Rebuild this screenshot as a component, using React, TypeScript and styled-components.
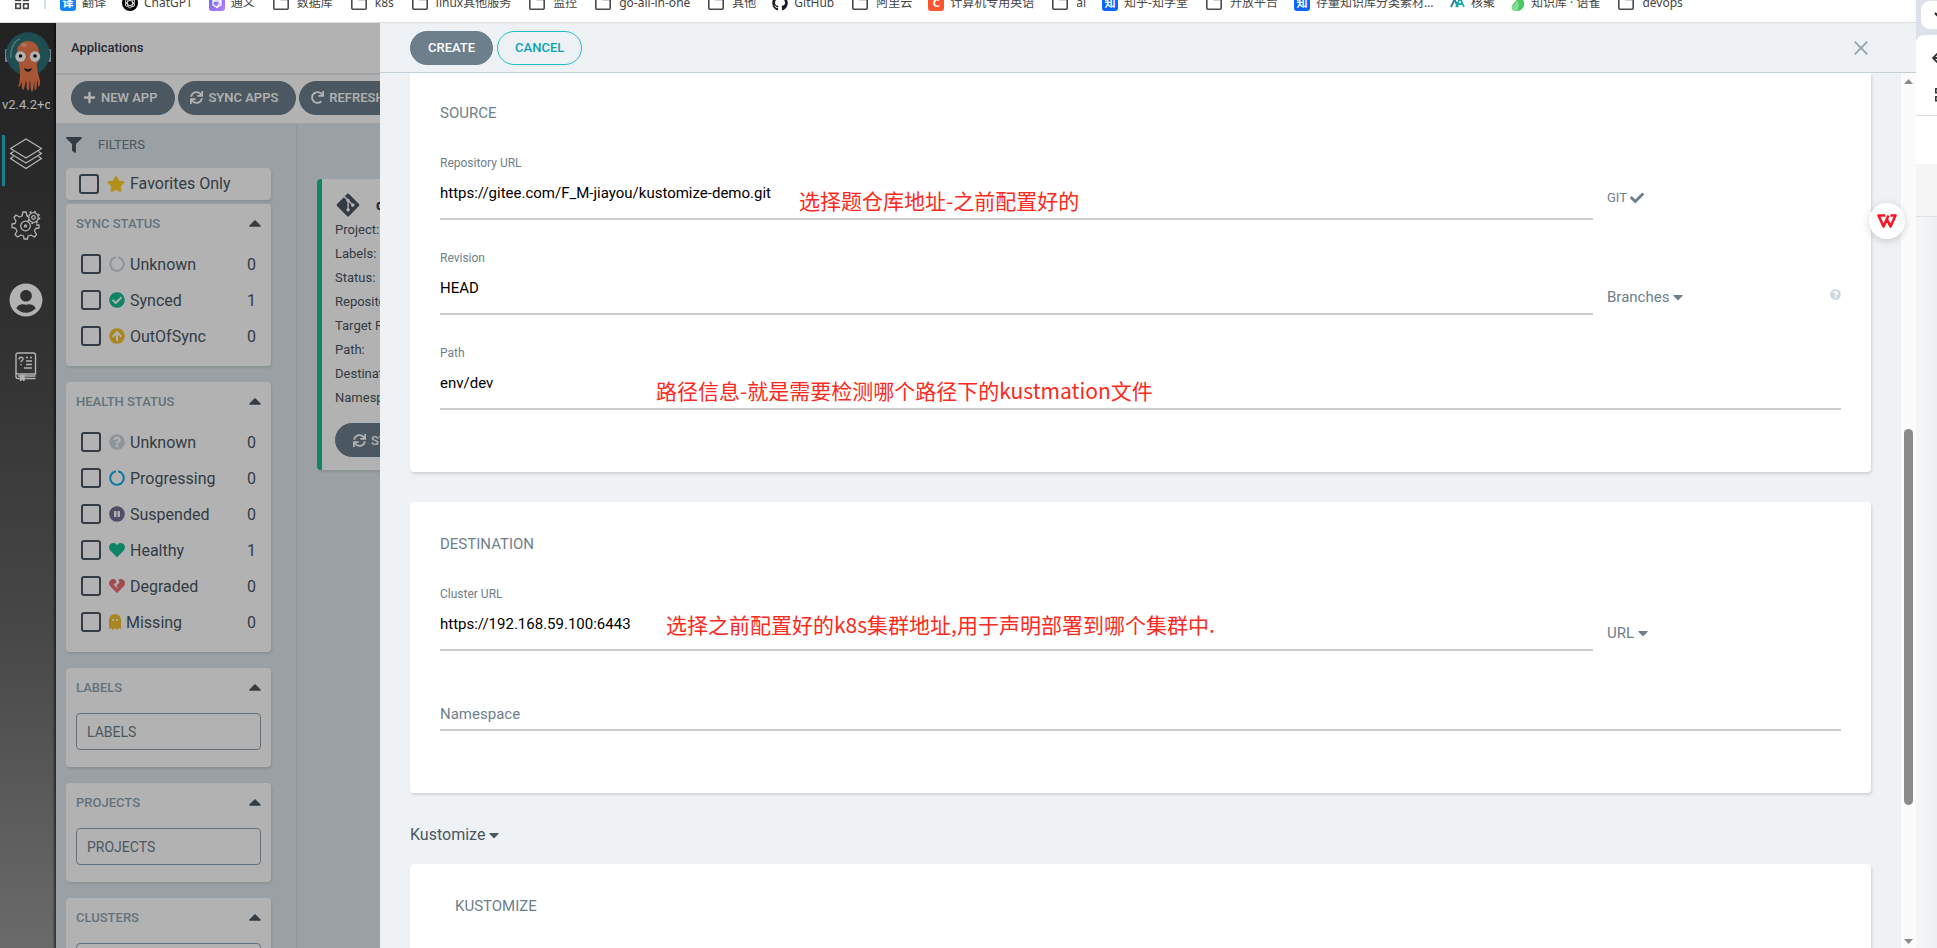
import React from "react";
import styled, { createGlobalStyle } from "styled-components";
import {
  FaPlus, FaSync, FaRedo, FaFilter, FaStar, FaCircleNotch, FaCheckCircle, FaArrowCircleUp,
  FaQuestionCircle, FaPauseCircle, FaHeart, FaHeartBroken, FaGhost, FaCaretUp, FaCaretDown,
  FaCheck, FaGithub, FaGitAlt, FaUserCircle,
} from "react-icons/fa";

const GlobalStyle = createGlobalStyle`
  *, *::before, *::after { box-sizing: border-box; }
  body { margin: 0; overflow: hidden; font-family: Roboto, "Noto Sans CJK SC", sans-serif; color: #495763; }
  button, input { font-family: inherit; }
  button { cursor: pointer; }
  svg { display: block; flex: none; }
  p, h1, h2, h3, ul, dl, dt { margin: 0; padding: 0; font-weight: 400; }
`;

/* ---------- window frame ---------- */

const Desktop = styled.div`
  display: flex;
  height: 100vh;
  overflow: hidden;
  background: #fff;
`;

const Browser = styled.div`
  position: relative;
  flex: 1;
  min-width: 0;
  display: flex;
  flex-direction: column;
`;

const BookmarkBar = styled.nav`
  flex: none;
  height: 23px;
  padding-left: 15px;
  border-bottom: 1px solid #dedede;
  display: flex;
  align-items: flex-start;
  gap: 16px;
  overflow: hidden;
  background: #fff;
`;

const Bookmark = styled.a`
  flex: none;
  display: flex;
  align-items: center;
  gap: 6px;
  height: 20px;
  margin-top: -7px;
  font: 12px/20px "Noto Sans", "Noto Sans CJK SC", sans-serif;
  color: #444;
  text-decoration: none;
  white-space: nowrap;
`;

const Truncated = styled.span`
  width: 118px;
  overflow: hidden;
  text-overflow: ellipsis;
`;

const BookmarkDivider = styled.span`
  width: 2px;
  height: 9px;
  margin: 0 -2px 0 -1px;
  background: #cfdff8;
`;

const Tile = styled.span<{ $bg: string }>`
  width: 16px;
  height: 16px;
  border-radius: 3px;
  background: ${(p) => p.$bg};
  color: #fff;
  font-size: 11px;
  font-weight: 700;
  line-height: 16px;
  text-align: center;
`;

const FolderIcon = () => (
  <svg width="20" height="20" viewBox="0 0 20 20" fill="none" stroke="#4a4a4a" strokeWidth="1.6">
    <path d="M2.8 4.2h5l2 2.2h7.4v8.8a1 1 0 0 1-1 1H3.8a1 1 0 0 1-1-1z" />
  </svg>
);

const AppsIcon = () => (
  <svg width="14" height="20" viewBox="0 0 14 20" fill="none" stroke="#444" strokeWidth="1.6">
    <rect x="0.8" y="2.8" width="4.6" height="4.6" />
    <rect x="8.6" y="2.8" width="4.6" height="4.6" />
    <rect x="0.8" y="10.8" width="4.6" height="4.6" />
    <rect x="8.6" y="10.8" width="4.6" height="4.6" />
  </svg>
);

const ChatIcon = () => (
  <svg width="16" height="16" viewBox="0 0 16 16">
    <circle cx="8" cy="8" r="8" fill="#000" />
    <g fill="none" stroke="#ddd" strokeWidth="0.9">
      <ellipse cx="8" cy="8" rx="2.5" ry="5" />
      <ellipse cx="8" cy="8" rx="2.5" ry="5" transform="rotate(60 8 8)" />
      <ellipse cx="8" cy="8" rx="2.5" ry="5" transform="rotate(120 8 8)" />
    </g>
  </svg>
);

const TongyiIcon = () => (
  <svg width="16" height="16" viewBox="0 0 16 16">
    <defs>
      <linearGradient id="ty" x1="0" y1="0" x2="1" y2="1">
        <stop offset="0" stopColor="#5a6bf5" />
        <stop offset="1" stopColor="#c27bf7" />
      </linearGradient>
    </defs>
    <rect width="16" height="16" rx="3" fill="url(#ty)" />
    <path d="M8 3l4 2.3v4.5L8 12.5 4 9.8V5.3z M4.5 6h7L8 12" fill="none" stroke="#fff" strokeWidth="1.3" />
  </svg>
);

const ClusterMarkIcon = () => (
  <svg width="15" height="16" viewBox="0 0 15 16" fill="none" strokeWidth="1.8">
    <path d="M1 12L4.5 4.5 8 12" stroke="#2a7f9d" />
    <path d="M6 12L10 3l4 9M8 9h4" stroke="#18b0a8" />
  </svg>
);

const YuqueIcon = () => (
  <svg width="14" height="16" viewBox="0 0 14 16">
    <path d="M8 0c4 3 6 7 5 11-1 3-4 5-7 5-4 0-6-2-5-5 1-3 4-4 5-7 1-2 1-3 2-4z" fill="#4cc764" />
    <path d="M1 12c2-3 4-4 5-7 2 3 3 7 0 11-4 0-6-1-5-4z" fill="#7edc8e" />
  </svg>
);

type Mark = { label: string; icon?: React.ReactNode; cut?: boolean };
const bookmarks: Mark[] = [
  { label: "翻译", icon: <Tile $bg="#1485ee">译</Tile> },
  { label: "ChatGPT", icon: <ChatIcon /> },
  { label: "通义", icon: <TongyiIcon /> },
  { label: "数据库" },
  { label: "k8s" },
  { label: "linux其他服务" },
  { label: "监控" },
  { label: "go-all-in-one" },
  { label: "其他" },
  { label: "GitHub", icon: <FaGithub size={16} color="#1b1f23" /> },
  { label: "阿里云" },
  { label: "计算机专用英语", icon: <Tile $bg="#fc5531">C</Tile> },
  { label: "ai" },
  { label: "知乎-知学堂", icon: <Tile $bg="#0a66ff">知</Tile> },
  { label: "开放平台" },
  { label: "存量知识库分类素材整理", icon: <Tile $bg="#0a66ff">知</Tile>, cut: true },
  { label: "核聚", icon: <ClusterMarkIcon /> },
  { label: "知识库 · 语雀", icon: <YuqueIcon /> },
  { label: "devops" },
];

/* ---------- application ---------- */

const AppArea = styled.div`
  position: relative;
  flex: 1;
  min-height: 0;
  display: flex;
`;

const Underlay = styled.div`
  position: relative;
  flex: none;
  width: 380px;
  display: flex;
  overflow: hidden;
`;

const Dim = styled.div`
  position: absolute;
  inset: 0;
  background: rgba(0, 0, 0, 0.3);
  pointer-events: none;
`;

const SideNav = styled.nav`
  position: relative;
  flex: none;
  width: 56px;
  padding-top: 9px;
  display: flex;
  flex-direction: column;
  align-items: center;
  background: linear-gradient(#313131, #484848 35%, #666 65%, #999);
  box-shadow: inset -3px 0 2px -1px rgba(0, 0, 0, 0.5);
`;

const Version = styled.div`
  width: 48px;
  height: 20px;
  margin-top: 1px;
  margin-right: 4px;
  font-size: 13px;
  line-height: 20px;
  color: #fff;
  overflow: hidden;
  white-space: nowrap;
`;

const NavLink = styled.a<{ $active?: boolean; $height: number }>`
  width: 52px;
  height: ${(p) => p.$height}px;
  padding: 0 7px ${(p) => (p.$active ? 14 : 0)}px 0;
  display: flex;
  align-items: center;
  justify-content: center;
  border-left: 3px solid ${(p) => (p.$active ? "#22b8cb" : "transparent")};
  color: #fff;
`;

const NavGroup = styled.div`
  display: flex;
  flex-direction: column;
  gap: 16px;
  padding-top: 20px;
`;

const Octopus = () => (
  <svg width="46" height="62" viewBox="0 0 46 62">
    <rect x="0" y="17" width="3" height="13" rx="1" fill="#a9bccb" />
    <rect x="43" y="17" width="3" height="13" rx="1" fill="#a9bccb" />
    <circle cx="23" cy="22" r="21.5" fill="#2d7074" stroke="#2d5f74" strokeWidth="1" />
    <path d="M6 26C5 17 9 9 15 7" fill="none" stroke="#7db6b9" strokeWidth="1.2" />
    <path
      d="M12 20c0-7 5-11 11-11s11 4 11 11c0 6-2 9-2 14 0 6 2 9 3 15 0 3 0 5-2 6 0-3 0-5-1-7 0 4 0 9-2 11-1-3 0-7-1-11 0 4 0 9-2 12-2-2-1-7-2-12-1 4 0 9-2 11-2-3-1-7-2-11-1 3-1 8-3 10-2-2-1-6-1-9-1 3-2 6-4 6 2-5 2-9 2-15 0-8-3-13-3-20z"
      fill="#f07a4c"
    />
    <ellipse cx="19" cy="13" rx="3" ry="2" fill="#f9a283" />
    <circle cx="15.5" cy="24.5" r="5.2" fill="#fff" />
    <circle cx="30" cy="24.5" r="5.2" fill="#fff" />
    <circle cx="15.5" cy="24" r="1.8" fill="#111" />
    <circle cx="30" cy="24" r="1.8" fill="#111" />
    <path d="M19 36c2 1.5 6 1.5 8 0-1 5-7 5-8 0z" fill="#222" />
  </svg>
);

const LayersIcon = () => (
  <svg width="34" height="32" viewBox="0 0 34 32" fill="none" stroke="#fff" strokeWidth="1.4" strokeLinejoin="round">
    <path d="M17 1l15.5 9.5L17 20 1.5 10.5z" />
    <path d="M4.5 13.5l-3 2L17 25l15.5-9.5-3-2" />
    <path d="M4.5 18.5l-3 2L17 30.500l15.5-10-3-2" />
  </svg>
);

const GearsIcon = () => (
  <svg width="30" height="30" viewBox="0 0 30 30" fill="none" stroke="#fff" strokeWidth="1.3" strokeLinejoin="round">
    <path d="M16 6l-1-4h-3l-1 4-2.5 1L5 5 3 7.5 5 11l-1 2.5-3 .5v3.5l3.5.7L6 21l-2 3.5L6.5 27l3.5-2 2.5 1 .5 3h3.5l.5-3 3-1 3.5 2 2-2.5-2-3.5 1-2.5 3.5-.5V15h-3" />
    <circle cx="14.5" cy="16" r="4.8" />
    <circle cx="14.5" cy="16" r="1" />
    <circle cx="22.5" cy="7.5" r="4.8" />
    <circle cx="22.5" cy="7.5" r="1.8" />
    <circle cx="22.5" cy="7.5" r="6" strokeDasharray="2 2.7" strokeWidth="1.6" />
  </svg>
);

const BookIcon = () => (
  <svg width="22" height="29" viewBox="0 0 22 29" fill="none" stroke="#fff" strokeWidth="1.4">
    <path d="M3 1h15.5a2 2 0 0 1 2 2v19H3a2 2 0 0 1-2-2V3a2 2 0 0 1 2-2z" />
    <path d="M1 20v4.5a2 2 0 0 0 2 2h17.5M3 24h17.5" />
    <path d="M5.5 23v5.5l1.8-1.5L9 28.500V23" fill="#fff" />
    <path d="M11 5.5h2M11 9h6M11 12.5h6M9 16h8M15 5.5h2" />
    <path d="M4 7.5c0-3 4-3 4-.5 0 1.5-2 1.5-2 3.2M6 12v1.3" />
  </svg>
);

const Content = styled.div`
  flex: none;
  width: 560px;
  display: flex;
  flex-direction: column;
  background: #dee6eb;
`;

const TopBar = styled.header`
  flex: none;
  height: 52px;
  padding: 0 15px;
  border-bottom: 2px solid #e2e9ec;
  background: #fff;
  font-size: 13px;
  font-weight: 500;
  line-height: 49px;
  color: #363c4a;
`;

const Toolbar = styled.div`
  flex: none;
  height: 50px;
  padding: 6px 15px;
  display: flex;
  gap: 3px;
  border-bottom: 2px solid #e2e9ec;
  background: #fff;
`;

const Pill = styled.button<{ $outline?: boolean }>`
  flex: none;
  height: 34px;
  padding: 0 17px;
  display: inline-flex;
  align-items: center;
  gap: 5px;
  border: 1px solid ${(p) => (p.$outline ? "#1fbdd0" : "#6d7f8b")};
  border-radius: 17px;
  background: ${(p) => (p.$outline ? "transparent" : "#6d7f8b")};
  color: ${(p) => (p.$outline ? "#0da2b4" : "#fff")};
  font-size: 13px;
  font-weight: 500;
  white-space: nowrap;
`;

const ToolPill = styled(Pill)`
  padding: 0 17px 2px 11px;
`;

const Workspace = styled.div`
  flex: 1;
  min-height: 0;
  display: flex;
`;

const Filters = styled.aside`
  flex: none;
  width: 241px;
  padding: 0 25px 0 10px;
  border-right: 1px solid #ccd4d9;
`;

const FiltersTitle = styled.h2`
  height: 43px;
  padding-bottom: 4px;
  display: flex;
  align-items: center;
  gap: 16px;
  font-size: 13px;
  color: #6d7f8b;
`;

const FilterCard = styled.section<{ $gap?: number }>`
  margin-bottom: ${(p) => p.$gap ?? 16}px;
  border-radius: 4px;
  background: #fff;
  box-shadow: 1px 2px 3px rgba(0, 0, 0, 0.1);
  overflow: hidden;
`;

const FilterHead = styled.h3`
  height: 42px;
  padding: 0 6px 4px 10px;
  display: flex;
  align-items: center;
  justify-content: space-between;
  font-size: 13px;
  font-weight: 500;
  color: #8fa4b1;
  svg { color: #495763; }
`;

const FilterRows = styled.div`
  padding: 0 15px 12px;
`;

const FilterRow = styled.label<{ $compact?: boolean }>`
  height: ${(p) => (p.$compact ? 32 : 36)}px;
  padding: ${(p) => (p.$compact ? "0 0 1px 13px" : "0")};
  display: flex;
  align-items: center;
  font-size: 16px;
  color: #495763;
`;

const Check = styled.input`
  appearance: none;
  flex: none;
  width: 20px;
  height: 20px;
  margin: 0 8px 0 0;
  border: 2px solid #495763;
  border-radius: 3px;
`;

const RowName = styled.span`
  flex: 1;
  padding-left: 5px;
`;

const GhostIcon = styled(FaGhost)`
  width: 12px;
`;

const FilterBox = styled.div`
  padding: 3px 10px 17px;
`;

const FilterInput = styled.input`
  display: block;
  width: 100%;
  height: 37px;
  padding: 0 10px;
  border: 1px solid #8fa4b1;
  border-radius: 4px;
  background: transparent;
  font-size: 14px;
  color: #495763;
  &::placeholder { color: #6d7f8b; opacity: 1; }
`;

const Tiles = styled.main`
  flex: 1;
  padding: 54px 20px;
`;

const AppTile = styled.article`
  height: 291px;
  padding: 13px;
  border-left: 5px solid #18be94;
  border-radius: 4px;
  background: #fff;
  box-shadow: 1px 2px 3px rgba(0, 0, 0, 0.1);
`;

const TileTitle = styled.h2`
  display: flex;
  align-items: center;
  gap: 15px;
  font-size: 15px;
  font-weight: 700;
  color: #363c4a;
  svg { color: #495763; }
`;

const TileFacts = styled.ul`
  list-style: none;
  margin-bottom: 13px;
  font-size: 13px;
  line-height: 24px;
  color: #495763;
`;

/* ---------- sliding panel ---------- */

const Panel = styled.section`
  flex: 1;
  min-width: 0;
  display: flex;
  flex-direction: column;
  background: #eef2f5;
`;

const PanelHead = styled.header`
  flex: none;
  height: 50px;
  padding: 0 46px 0 30px;
  display: flex;
  align-items: center;
  gap: 4px;
  border-bottom: 1px solid #c5d1d8;
`;

const CloseButton = styled.button`
  margin-left: auto;
  padding: 2px;
  border: 0;
  background: none;
`;

const PanelBody = styled.div`
  flex: 1;
  min-height: 0;
  display: flex;
`;

const Form = styled.form`
  flex: 1;
  min-width: 0;
  padding: 0 30px;
  overflow: hidden;
`;

const Card = styled.section<{ $first?: boolean }>`
  padding: ${(p) => (p.$first ? 30 : 32)}px 30px 62px;
  border-radius: ${(p) => (p.$first ? "0 0 4px 4px" : "4px")};
  background: #fff;
  box-shadow: 1px 2px 3px rgba(0, 0, 0, 0.13);
  & + & { margin-top: 30px; }
`;

const CardTitle = styled.h2<{ $indent?: boolean }>`
  padding-left: ${(p) => (p.$indent ? 15 : 0)}px;
  margin-bottom: 2px;
  font-size: 15px;
  line-height: 20px;
  color: #6d7f8b;
`;

const FieldRow = styled.div`
  display: flex;
  gap: 14px;
`;

const Field = styled.div<{ $tall?: boolean }>`
  position: relative;
  flex: 1;
  min-width: 0;
  padding-top: ${(p) => (p.$tall ? 52 : 28)}px;
`;

const FieldLabel = styled.label`
  display: block;
  font-size: 12px;
  line-height: 20px;
  color: #6d7f8b;
`;

const FieldInput = styled.input<{ $height?: number }>`
  display: block;
  width: 100%;
  height: ${(p) => p.$height ?? 47}px;
  padding: 0 0 5px;
  border: 0;
  border-bottom: 2px solid #ccc;
  border-radius: 0;
  background: transparent;
  font-size: 15px;
  color: #000;
  &::placeholder { color: #6d7f8b; opacity: 1; }
`;

const FieldSide = styled.div<{ $lift?: number }>`
  flex: none;
  width: 234px;
  display: flex;
  align-items: flex-end;
  justify-content: space-between;
  padding-bottom: ${(p) => p.$lift ?? 8}px;
`;

const HelpIcon = styled(FaQuestionCircle)`
  margin-bottom: 7px;
  color: #ccd6dd;
`;

const DropButton = styled.button<{ $dark?: boolean; $small?: boolean }>`
  padding: 0;
  border: 0;
  background: none;
  display: inline-flex;
  align-items: center;
  gap: ${(p) => (p.$small ? 3 : 1)}px;
  font-size: ${(p) => (p.$dark ? 16 : p.$small ? 13 : 15)}px;
  line-height: 20px;
  color: ${(p) => (p.$dark ? "#495763" : "#6d7f8b")};
`;

const SourceType = styled.div`
  height: 71px;
  padding-top: 32px;
`;

const Annotation = styled.span<{ $left: number; $bottom: number }>`
  position: absolute;
  left: ${(p) => p.$left}px;
  bottom: ${(p) => p.$bottom}px;
  font: 21px/28px "Noto Sans CJK SC", sans-serif;
  color: #fc2a1c;
  white-space: nowrap;
  pointer-events: none;
`;

const ScrollTrack = styled.div`
  flex: none;
  width: 15px;
  padding: 6px 0 4px;
  display: flex;
  flex-direction: column;
  align-items: center;
  background: #fbfbfb;
`;

const ScrollArrow = styled.span<{ $down?: boolean }>`
  flex: none;
  width: 9px;
  height: 5px;
  background: #8b8b8b;
  clip-path: ${(p) => (p.$down ? "polygon(0 0, 100% 0, 50% 100%)" : "polygon(50% 0, 100% 100%, 0 100%)")};
`;

const ScrollLane = styled.div`
  flex: 1;
  display: flex;
  flex-direction: column;
  padding: 0 3px;
`;

const ScrollSpace = styled.div<{ $grow: number }>`
  flex: ${(p) => p.$grow};
`;

const ScrollThumb = styled.div`
  flex: 376;
  width: 9px;
  border-radius: 5px;
  background: #8b8b8b;
`;

const FloatingBadge = styled.button`
  position: absolute;
  right: 11px;
  top: 203px;
  width: 36px;
  height: 36px;
  padding: 0;
  display: flex;
  align-items: center;
  justify-content: center;
  border: 0;
  border-radius: 50%;
  background: #fff;
  box-shadow: 0 2px 8px rgba(0, 0, 0, 0.16);
`;

/* ---------- neighbouring browser window ---------- */

const Neighbor = styled.aside`
  flex: none;
  width: 21px;
  display: flex;
  flex-direction: column;
  overflow: hidden;
  background: #dde2ea;
`;

const NeighborTab = styled.div`
  flex: none;
  height: 28px;
  margin: 1px 0 6px 5px;
  padding: 10px 0 0 13px;
  border-radius: 9px 0 0 9px;
  background: #fff;
`;

const NeighborTools = styled.div`
  flex: none;
  height: 81px;
  padding: 17px 0 0 16px;
  display: flex;
  flex-direction: column;
  gap: 23px;
  border-bottom: 1px solid #dcdcdc;
  border-radius: 8px 0 0 0;
  background: #fff;
`;

const NeighborBand = styled.div<{ $height: number; $bg: string }>`
  flex: none;
  height: ${(p) => p.$height}px;
  background: ${(p) => p.$bg};
`;

const NeighborPage = styled.div`
  flex: 1;
  border-top: 1px solid #e3e3e3;
  background: linear-gradient(90deg, #f5f6f8, #eff0f5);
`;

const syncRows: [string, number, React.ReactNode][] = [
  ["Unknown", 0, <FaCircleNotch size={16} color="#ccd6dd" />],
  ["Synced", 1, <FaCheckCircle size={16} color="#18be94" />],
  ["OutOfSync", 0, <FaArrowCircleUp size={16} color="#f4c030" />],
];

const healthRows: [string, number, React.ReactNode][] = [
  ["Unknown", 0, <FaQuestionCircle size={16} color="#ccd6dd" />],
  ["Progressing", 0, <FaCircleNotch size={16} color="#0dadea" />],
  ["Suspended", 0, <FaPauseCircle size={16} color="#766f94" />],
  ["Healthy", 1, <FaHeart size={16} color="#18be94" />],
  ["Degraded", 0, <FaHeartBroken size={16} color="#e96d76" />],
  ["Missing", 0, <GhostIcon size={16} color="#f4c030" preserveAspectRatio="none" />],
];

const tileFacts = ["Project:", "Labels:", "Status:", "Repository:", "Target Revision:", "Path:", "Destination:", "Namespace:"];

const StatusFilter = ({ title, rows }: { title: string; rows: [string, number, React.ReactNode][] }) => (
  <FilterCard>
    <FilterHead>{title}<FaCaretUp size={20} /></FilterHead>
    <FilterRows>
      {rows.map(([name, count, icon]) => (
        <FilterRow key={name}>
          <Check type="checkbox" />
          {icon}
          <RowName>{name}</RowName>
          <span>{count}</span>
        </FilterRow>
      ))}
    </FilterRows>
  </FilterCard>
);

export default function App() {
  return (
    <>
      <GlobalStyle />
      <Desktop>
        <Browser>
          <BookmarkBar>
            <Bookmark href="#" aria-label="Apps"><AppsIcon /></Bookmark>
            <BookmarkDivider />
            {bookmarks.map((b) => (
              <Bookmark href="#" key={b.label}>
                {b.icon ?? <FolderIcon />}
                {b.cut ? <Truncated>{b.label}</Truncated> : <span>{b.label}</span>}
              </Bookmark>
            ))}
          </BookmarkBar>

          <AppArea>
            <Underlay>
              <SideNav>
                <Octopus />
                <Version>v2.4.2+c</Version>
                <NavGroup>
                  <NavLink href="#" $active $height={51} aria-label="Applications"><LayersIcon /></NavLink>
                  <NavLink href="#" $height={46} aria-label="Settings"><GearsIcon /></NavLink>
                  <NavLink href="#" $height={72} aria-label="User"><FaUserCircle size={34} /></NavLink>
                  <NavLink href="#" $height={29} aria-label="Documentation"><BookIcon /></NavLink>
                </NavGroup>
              </SideNav>
              <Content>
                <TopBar>Applications</TopBar>
                <Toolbar>
                  <ToolPill><FaPlus size={13} />NEW APP</ToolPill>
                  <ToolPill><FaSync size={13} />SYNC APPS</ToolPill>
                  <ToolPill><FaRedo size={13} />REFRESH APPS</ToolPill>
                </Toolbar>
                <Workspace>
                  <Filters>
                    <FiltersTitle><FaFilter size={16} color="#495763" />FILTERS</FiltersTitle>
                    <FilterCard $gap={4}>
                      <FilterRow $compact>
                        <Check type="checkbox" />
                        <FaStar size={18} color="#ffce25" />
                        <RowName>Favorites Only</RowName>
                      </FilterRow>
                    </FilterCard>
                    <StatusFilter title="SYNC STATUS" rows={syncRows} />
                    <StatusFilter title="HEALTH STATUS" rows={healthRows} />
                    {["LABELS", "PROJECTS", "CLUSTERS"].map((t) => (
                      <FilterCard key={t}>
                        <FilterHead>{t}<FaCaretUp size={20} /></FilterHead>
                        <FilterBox><FilterInput placeholder={t} aria-label={t} /></FilterBox>
                      </FilterCard>
                    ))}
                  </Filters>
                  <Tiles>
                    <AppTile>
                      <TileTitle><FaGitAlt size={26} />devops-demo</TileTitle>
                      <TileFacts>{tileFacts.map((f) => <li key={f}>{f}</li>)}</TileFacts>
                      <Pill><FaSync size={13} />SYNC</Pill>
                    </AppTile>
                  </Tiles>
                </Workspace>
              </Content>
              <Dim />
            </Underlay>

            <Panel>
              <PanelHead>
                <Pill>CREATE</Pill>
                <Pill $outline>CANCEL</Pill>
                <CloseButton aria-label="Close">
                  <svg width="14" height="14" viewBox="0 0 14 14" stroke="#8fa4b1" strokeWidth="1.8">
                    <path d="M0.7 0.7l12.6 12.6M13.3 0.7L0.7 13.3" />
                  </svg>
                </CloseButton>
              </PanelHead>
              <PanelBody>
                <Form>
                  <Card $first>
                    <CardTitle>SOURCE</CardTitle>
                    <FieldRow>
                      <Field>
                        <FieldLabel htmlFor="repo">Repository URL</FieldLabel>
                        <FieldInput id="repo" defaultValue="https://gitee.com/F_M-jiayou/kustomize-demo.git" />
                        <Annotation $left={359} $bottom={6}>选择题仓库地址-之前配置好的</Annotation>
                      </Field>
                      <FieldSide $lift={12}>
                        <DropButton type="button" $small>GIT<FaCheck size={14} /></DropButton>
                      </FieldSide>
                    </FieldRow>
                    <FieldRow>
                      <Field>
                        <FieldLabel htmlFor="revision">Revision</FieldLabel>
                        <FieldInput id="revision" defaultValue="HEAD" />
                      </Field>
                      <FieldSide>
                        <DropButton type="button">Branches<FaCaretDown size={16} /></DropButton>
                        <HelpIcon size={11} />
                      </FieldSide>
                    </FieldRow>
                    <FieldRow>
                      <Field>
                        <FieldLabel htmlFor="path">Path</FieldLabel>
                        <FieldInput id="path" defaultValue="env/dev" />
                        <Annotation $left={216} $bottom={6}>路径信息-就是需要检测哪个路径下的kustmation文件</Annotation>
                      </Field>
                    </FieldRow>
                  </Card>
                  <Card>
                    <CardTitle>DESTINATION</CardTitle>
                    <FieldRow>
                      <Field>
                        <FieldLabel htmlFor="cluster">Cluster URL</FieldLabel>
                        <FieldInput id="cluster" defaultValue="https://192.168.59.100:6443" />
                        <Annotation $left={226} $bottom={13}>选择之前配置好的k8s集群地址,用于声明部署到哪个集群中.</Annotation>
                      </Field>
                      <FieldSide>
                        <DropButton type="button">URL<FaCaretDown size={16} /></DropButton>
                      </FieldSide>
                    </FieldRow>
                    <FieldRow>
                      <Field $tall>
                        <FieldInput $height={28} aria-label="Namespace" placeholder="Namespace" />
                      </Field>
                    </FieldRow>
                  </Card>
                  <SourceType>
                    <DropButton type="button" $dark>Kustomize<FaCaretDown size={16} /></DropButton>
                  </SourceType>
                  <Card>
                    <CardTitle $indent>KUSTOMIZE</CardTitle>
                  </Card>
                </Form>
                <ScrollTrack>
                  <ScrollArrow />
                  <ScrollLane>
                    <ScrollSpace $grow={345} />
                    <ScrollThumb />
                    <ScrollSpace $grow={134} />
                  </ScrollLane>
                  <ScrollArrow $down />
                </ScrollTrack>
              </PanelBody>
            </Panel>
          </AppArea>
          <FloatingBadge aria-label="WPS">
            <svg width="20" height="14" viewBox="0 0 20 14" fill="none" stroke="#fb1425" strokeWidth="2.6" strokeLinejoin="round">
              <path d="M8.5 1.5H1.5L6.5 12.5L11.5 1.5M9.5 4.5L13.5 12.5L18.5 1.5H13.5" />
            </svg>
          </FloatingBadge>
        </Browser>

        <Neighbor>
          <NeighborTab>
            <svg width="10" height="8" viewBox="0 0 10 8" fill="none" stroke="#222" strokeWidth="2"><path d="M1 2l4 4 4-4" /></svg>
          </NeighborTab>
          <NeighborTools>
            <svg width="12" height="12" viewBox="0 0 12 12" fill="none" stroke="#333" strokeWidth="1.8"><path d="M12 6H2M6 1L1 6l5 5" /></svg>
            <svg width="16" height="16" viewBox="0 0 16 16" fill="none" stroke="#333" strokeWidth="1.6">
              <path d="M3.8 1.8h4v4h-4zM3.8 9.8h4v4h-4z" />
            </svg>
          </NeighborTools>
          <NeighborBand $height={48} $bg="#fff" />
          <NeighborBand $height={52} $bg="#f5f5f5" />
          <NeighborPage />
        </Neighbor>
      </Desktop>
    </>
  );
}
